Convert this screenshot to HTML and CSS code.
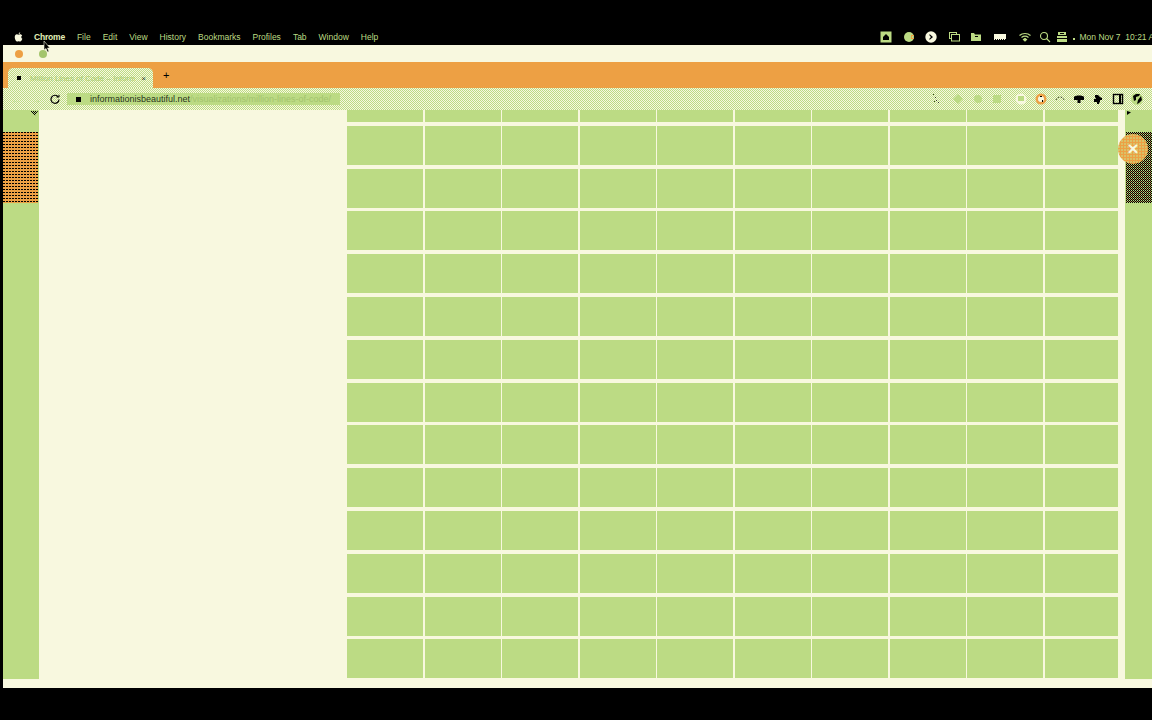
FILE: index.html
```html
<!DOCTYPE html>
<html lang="en">
<head>
    <meta charset="UTF-8">
    <title>Million Lines of Code</title>
    <link rel="stylesheet" href="styles.css">
</head>
<body>
    <div class="menubar">
        <div class="menu">
            <svg class="apple" viewBox="0 0 10 12"><path d="M7 0.3C6 .5 5.2 1.4 5.2 2.6 6.3 2.5 7.1 1.5 7 .3zM5 3.2C4.400 3.200 3.900 2.800 3.100 2.800 1.700 2.900.5 4 .5 6.200.5 8.700 2.100 11.500 3.300 11.500 4 11.500 4.300 11 5.100 11 6 11 6.200 11.500 7 11.500 8.200 11.500 9.300 9.300 9.600 8.200 8.300 7.700 7.700 5.300 9.400 4.200 8.700 3.200 7.700 2.800 6.900 2.800 6.100 2.800 5.500 3.200 5 3.200z"/></svg>
            <span class="menu-item active">Chrome</span>
            <span class="menu-item">File</span>
            <span class="menu-item">Edit</span>
            <span class="menu-item">View</span>
            <span class="menu-item">History</span>
            <span class="menu-item">Bookmarks</span>
            <span class="menu-item">Profiles</span>
            <span class="menu-item">Tab</span>
            <span class="menu-item">Window</span>
            <span class="menu-item">Help</span>
        </div>
        <div class="status">
            <svg class="st" viewBox="0 0 12 12"><rect x=".5" y=".5" width="11" height="11" fill="#bcdb84"/><path d="M6 3 9 6V9H3V6z" fill="#000"/></svg>
            <svg class="st" viewBox="0 0 12 12"><circle cx="6" cy="6" r="5" fill="#bcdb84"/><path d="M8 4h3v1H9v2h2v1H8z" fill="#eda044"/></svg>
            <svg class="st" viewBox="0 0 12 12"><circle cx="6" cy="6" r="5.700" fill="#f8f8df"/><path d="M4.500 3 8 6 4.500 9V7.500L6 6 4.500 4.500z" fill="#000"/></svg>
            <svg class="st" viewBox="0 0 12 12" fill="none" stroke="#bcdb84"><rect x="1.500" y="1.500" width="7" height="6"/><rect x="3.500" y="3.500" width="8" height="6.500" fill="#000"/></svg>
            <svg class="st" viewBox="0 0 12 12"><path d="M1 2h3l1 1.500h6V10H1z" fill="#bcdb84"/><rect x="5" y="5" width="3" height="1" fill="#000"/></svg>
            <svg class="st wide" viewBox="0 0 14 12"><path d="M1 3h12v5h-1v1h-1V8h-1v1H9V8H8v1H7V8H6v1H5V8H4v1H3V8H2v1H1z" fill="#f8f8df"/></svg>
            <svg class="st wifi" viewBox="0 0 12 12" fill="none" stroke="#bcdb84" stroke-width="1.200"><path d="M.5 4.500C3.500 1.800 8.500 1.800 11.500 4.500M2.500 6.500C4.500 5 7.500 5 9.500 6.500"/><path d="M4.500 8.500 6 7.500 7.500 8.500 6 10z" fill="#bcdb84"/></svg>
            <svg class="st" viewBox="0 0 12 12" fill="none" stroke="#bcdb84" stroke-width="1.100"><circle cx="5" cy="5" r="3.500"/><path d="M7.500 7.500 11 11"/></svg>
            <svg class="st ctl" viewBox="0 0 12 12"><path d="M2 1h8v3H2zM1 5h10v2H1zM1 8h10v3H1z" fill="#bcdb84"/><rect x="4" y="2" width="4" height="1" fill="#000"/></svg>
            <span class="clock-dot"></span>
            <span class="clock">Mon Nov 7&nbsp;&nbsp;10:21 AM</span>
        </div>
    </div>

    <div class="window">
        <div class="title-strip">
            <span class="light orange"></span>
            <span class="light green"></span>
        </div>
        <div class="tabbar">
            <div class="tab">
                <span class="favicon"></span>
                <span class="tab-title">Million Lines of Code – Inform</span>
                <span class="tab-close">×</span>
            </div>
            <span class="new-tab">+</span>
        </div>
        <div class="toolbar">
            <span class="nav">←</span>
            <span class="nav">→</span>
            <svg class="reload" viewBox="0 0 10 10" fill="none" stroke="#000" stroke-width="1.200"><path d="M8.300 3A4 4 0 1 0 9 5.500"/><path d="M6.500 3H9V.8" stroke-width="1"/></svg>
            <div class="address">
                <span class="lock"></span>
                <span class="url">informationisbeautiful.net</span>
                <span class="url-rest">/visualizations/million-lines-of-code/</span>
            </div>
            <div class="tools">
                <svg class="tool first" viewBox="0 0 12 12" fill="#33401f"><path d="M3 1h1v1H3zM5 4h1v1H5zM6 7h1v1H6zM8 9h1v1H8zM4 8h1v1H4z"/></svg>
                <svg class="tool" viewBox="0 0 12 12" fill="#bcdb84"><path d="M6 1 11 6 6 11 1 6z"/></svg>
                <svg class="tool" viewBox="0 0 12 12" fill="#bcdb84"><circle cx="6" cy="6" r="4"/></svg>
                <svg class="tool pinned-end" viewBox="0 0 12 12" fill="#bcdb84"><rect x="2" y="2" width="8" height="8"/></svg>
                <svg class="tool" viewBox="0 0 12 12"><circle cx="6" cy="6" r="5.500" fill="#f8f8df"/><rect x="3" y="3" width="6" height="5" fill="#bcdb84"/></svg>
                <svg class="tool" viewBox="0 0 12 12"><circle cx="6" cy="6" r="5.500" fill="#eda044"/><circle cx="6" cy="6" r="3" fill="#f8f8df"/><path d="M5 3h2v1H5zM7 7h1v2H7z" fill="#000"/></svg>
                <svg class="tool" viewBox="0 0 12 12" fill="none" stroke="#33401f"><path d="M2 7C3 3 9 3 10 7" stroke-dasharray="1.500 1.500"/></svg>
                <svg class="tool" viewBox="0 0 12 12"><path d="M1 4C2 2 10 2 11 4V7H1z" fill="#000"/><rect x="4.500" y="7" width="3" height="3" fill="#000"/></svg>
                <svg class="tool" viewBox="0 0 12 12"><path d="M3 2h3l1 1 1 1 2 1v2H8v2l-1 1v1H5V9H2V6h2L3 4z" fill="#000"/></svg>
                <svg class="tool" viewBox="0 0 12 12" fill="none" stroke="#000" stroke-width="1.400"><rect x="1.500" y="1.500" width="9" height="9"/><path d="M8 2v8" stroke-width="2"/></svg>
                <svg class="tool" viewBox="0 0 12 12"><circle cx="6" cy="6" r="6" fill="#bcdb84"/><path d="M2 3 5 1 9 1 8 3 5 4 5 7 3 8zM10 3 11 7 8 10 6 11 7 7z" fill="#000"/></svg>
            </div>
        </div>
        <div class="content">
            <div class="rail left-rail">
                <span class="rail-mark"></span>
                <div class="ad ad-orange">
                    <svg class="ad-dots" width="35" height="71">
                        <defs>
                            <pattern id="adDots" width="3" height="3" patternUnits="userSpaceOnUse">
                                <rect width="2" height="1"/>
                            </pattern>
                        </defs>
                        <rect width="35" height="71" fill="url(#adDots)"/>
                    </svg>
                </div>
            </div>
            <div class="panel"></div>
            <div class="grid">
                <div class="cell"></div><div class="cell"></div><div class="cell"></div><div class="cell"></div><div class="cell"></div><div class="cell"></div><div class="cell"></div><div class="cell"></div><div class="cell"></div><div class="cell"></div>
                <div class="cell"></div><div class="cell"></div><div class="cell"></div><div class="cell"></div><div class="cell"></div><div class="cell"></div><div class="cell"></div><div class="cell"></div><div class="cell"></div><div class="cell"></div>
                <div class="cell"></div><div class="cell"></div><div class="cell"></div><div class="cell"></div><div class="cell"></div><div class="cell"></div><div class="cell"></div><div class="cell"></div><div class="cell"></div><div class="cell"></div>
                <div class="cell"></div><div class="cell"></div><div class="cell"></div><div class="cell"></div><div class="cell"></div><div class="cell"></div><div class="cell"></div><div class="cell"></div><div class="cell"></div><div class="cell"></div>
                <div class="cell"></div><div class="cell"></div><div class="cell"></div><div class="cell"></div><div class="cell"></div><div class="cell"></div><div class="cell"></div><div class="cell"></div><div class="cell"></div><div class="cell"></div>
                <div class="cell"></div><div class="cell"></div><div class="cell"></div><div class="cell"></div><div class="cell"></div><div class="cell"></div><div class="cell"></div><div class="cell"></div><div class="cell"></div><div class="cell"></div>
                <div class="cell"></div><div class="cell"></div><div class="cell"></div><div class="cell"></div><div class="cell"></div><div class="cell"></div><div class="cell"></div><div class="cell"></div><div class="cell"></div><div class="cell"></div>
                <div class="cell"></div><div class="cell"></div><div class="cell"></div><div class="cell"></div><div class="cell"></div><div class="cell"></div><div class="cell"></div><div class="cell"></div><div class="cell"></div><div class="cell"></div>
                <div class="cell"></div><div class="cell"></div><div class="cell"></div><div class="cell"></div><div class="cell"></div><div class="cell"></div><div class="cell"></div><div class="cell"></div><div class="cell"></div><div class="cell"></div>
                <div class="cell"></div><div class="cell"></div><div class="cell"></div><div class="cell"></div><div class="cell"></div><div class="cell"></div><div class="cell"></div><div class="cell"></div><div class="cell"></div><div class="cell"></div>
                <div class="cell"></div><div class="cell"></div><div class="cell"></div><div class="cell"></div><div class="cell"></div><div class="cell"></div><div class="cell"></div><div class="cell"></div><div class="cell"></div><div class="cell"></div>
                <div class="cell"></div><div class="cell"></div><div class="cell"></div><div class="cell"></div><div class="cell"></div><div class="cell"></div><div class="cell"></div><div class="cell"></div><div class="cell"></div><div class="cell"></div>
                <div class="cell"></div><div class="cell"></div><div class="cell"></div><div class="cell"></div><div class="cell"></div><div class="cell"></div><div class="cell"></div><div class="cell"></div><div class="cell"></div><div class="cell"></div>
                <div class="cell"></div><div class="cell"></div><div class="cell"></div><div class="cell"></div><div class="cell"></div><div class="cell"></div><div class="cell"></div><div class="cell"></div><div class="cell"></div><div class="cell"></div>
            </div>
            <div class="gutter"></div>
            <div class="rail right-rail">
                <span class="rail-mark small"></span>
                <div class="ad ad-dark"></div>
            </div>
            <div class="close-btn">×</div>
        </div>
    </div>

    <svg class="cursor" viewBox="0 0 8 12"><path d="M1 0V9L3 7.500 4.500 11 6 10.500 4.500 7H7z" fill="#000" stroke="#f8f8df" stroke-width=".6"/></svg>
</body>
</html>
```

FILE: styles.css
```css
body {
    margin: 0;
    width: 1152px;
    height: 720px;
    overflow: hidden;
    background-color: #000;
    font-family: "Liberation Sans", Arial, sans-serif;
    position: relative;
}

.menubar {
    display: flex;
    height: 45px;
    box-sizing: border-box;
    padding-top: 29px;
    color: #bcdb84;
    font-size: 8.5px;
    line-height: 16px;
}

.menu {
    display: flex;
    flex: 1;
    align-items: center;
    gap: 12px;
    padding-left: 14px;
    height: 16px;
}

.apple {
    width: 9px;
    height: 10px;
    fill: #f8f8df;
    margin-right: -1px;
}

.menu-item.active {
    color: #e4efb8;
    font-weight: bold;
    letter-spacing: -0.2px;
}

.status {
    display: flex;
    flex: none;
    width: 272px;
    height: 16px;
    align-items: center;
    overflow: hidden;
    white-space: nowrap;
    box-sizing: border-box;
}

.st {
    flex: none;
    width: 12px;
    height: 12px;
    margin-right: 10.500px;
}

.st.wide {
    width: 14px;
    margin-right: 12px;
}

.st.wifi {
    margin-right: 8.500px;
}

.st.ctl {
    margin-right: 5px;
    margin-left: -6px;
}

.clock-dot {
    flex: none;
    width: 2px;
    height: 2px;
    margin-right: 5px;
    margin-top: 3px;
    background-color: #bcdb84;
}

.clock {
    flex: none;
    font-size: 8.500px;
}

.window {
    display: flex;
    flex-direction: column;
    margin-left: 3px;
    height: 643px;
    background-color: #f8f8df;
}

.title-strip {
    display: flex;
    align-items: center;
    gap: 16px;
    height: 17px;
    padding-left: 12px;
    box-sizing: border-box;
}

.light {
    width: 8px;
    height: 8px;
    border-radius: 50%;
}

.light.orange {
    background-color: #eda044;
}

.light.green {
    background-color: #a4c56c;
}

.tabbar {
    display: flex;
    align-items: flex-end;
    height: 26px;
    background-color: #eda044;
    padding-left: 5px;
}

.tab,
.toolbar {
    background-color: #f8f8df;
    background-image: conic-gradient(#bcdb84 25%, transparent 0 50%, #bcdb84 0 75%, transparent 0);
    background-size: 2px 2px;
}

.tab {
    display: flex;
    align-items: center;
    width: 145px;
    height: 20px;
    box-sizing: border-box;
    padding: 0 7px 0 9px;
    border-radius: 5px 5px 0 0;
    font-size: 8px;
}

.favicon {
    flex: none;
    width: 4px;
    height: 4px;
    background-color: #000;
    margin-right: 9px;
}

.tab-title {
    flex: 1;
    color: #a9cc70;
    white-space: nowrap;
    overflow: hidden;
}

.tab-close {
    flex: none;
    font-size: 8px;
    color: #33401f;
    margin-left: 6px;
}

.new-tab {
    align-self: center;
    margin-left: 10px;
    font-size: 11px;
    line-height: 12px;
    color: #000;
}

.toolbar {
    display: flex;
    align-items: center;
    height: 22px;
    padding-left: 3px;
}

.nav {
    width: 20px;
    font-size: 10px;
    color: #bcdb84;
    text-align: center;
}

.reload {
    width: 10px;
    height: 10px;
    margin-left: 4px;
}

.address {
    display: flex;
    align-items: center;
    width: 273px;
    height: 12px;
    margin-left: 7px;
    padding-left: 9px;
    box-sizing: border-box;
    background-color: #bcdb84;
    overflow: hidden;
    white-space: nowrap;
    font-size: 9px;
}

.lock {
    flex: none;
    width: 5px;
    height: 5px;
    background-color: #000;
    margin-right: 9px;
}

.url {
    color: #28331a;
}

.url-rest {
    color: #a3c46c;
}

.tools {
    display: flex;
    gap: 7.300px;
    margin-left: auto;
    margin-right: 9px;
}

.tool {
    width: 12px;
    height: 12px;
}

.tool.first {
    margin-right: 3px;
}

.tool.pinned-end {
    margin-right: 5px;
}

.content {
    display: flex;
    position: relative;
    flex: 1;
    padding-bottom: 9px;
    box-sizing: border-box;
    min-height: 0;
}

.rail {
    position: relative;
    background-color: #bcdb84;
    padding-top: 22px;
    box-sizing: border-box;
}

.left-rail {
    width: 36px;
}

.right-rail {
    width: 27px;
    flex: none;
}

.rail-mark {
    position: absolute;
    top: 1px;
    right: 1px;
    width: 8px;
    height: 5px;
    background-image: conic-gradient(#000 25%, transparent 0 50%, #000 0 75%, transparent 0);
    background-size: 2px 2px;
    clip-path: polygon(0 0, 100% 0, 60% 100%);
}

.rail-mark.small {
    right: auto;
    left: 2px;
    width: 4px;
    height: 4px;
    background-image: none;
    background-color: #000;
    clip-path: polygon(0 0, 100% 30%, 0 100%);
}

.ad {
    height: 71px;
}

.ad-orange {
    width: 35px;
    background-color: #eda044;
}

.ad-dots {
    display: block;
}

.ad-dark {
    margin-left: 1px;
    background-color: #000;
    background-image: conic-gradient(#bcdb84 25%, transparent 0 50%, #a98a4a 0 75%, transparent 0);
    background-size: 2px 2px;
}

.panel {
    width: 308px;
    flex: none;
}

.grid {
    display: grid;
    flex: none;
    width: 771px;
    grid-template-columns: repeat(9, 76px) 1fr;
    grid-template-rows: 12px repeat(13, 39px);
    column-gap: 1.500px;
    row-gap: 3.800px;
    overflow: hidden;
}

.cell {
    background-color: #bcdb84;
}

.gutter {
    width: 7px;
    flex: none;
}

.close-btn {
    position: absolute;
    left: 1115px;
    top: 24px;
    width: 30px;
    height: 30px;
    border-radius: 50%;
    background-color: #eda044;
    background-image: radial-gradient(circle at 1px 1px, #d8c46a 0.7px, transparent 0.8px);
    background-size: 3px 3px;
    color: #f8f8df;
    font-size: 19px;
    font-weight: bold;
    line-height: 29px;
    text-align: center;
}

.cursor {
    position: absolute;
    left: 43px;
    top: 41px;
    width: 8px;
    height: 12px;
}
```
